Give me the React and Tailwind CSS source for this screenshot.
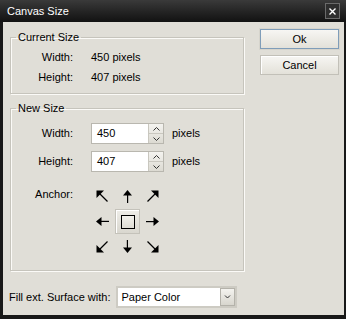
import React from 'react';

const font = "font-['Liberation_Sans',Arial,sans-serif]";

function Arrow({ dir }) {
  const rot = { n: 0, e: 90, s: 180, w: 270 }[dir];
  return (
    <svg width="13" height="13" viewBox="0 0 13 13" style={{ transform: `rotate(${rot}deg)` }}>
      <polygon points="6.5,0 2,5.5 11,5.5" fill="#000" />
      <rect x="6" y="5" width="1.2" height="8" fill="#000" />
    </svg>
  );
}

function Diag({ dir }) {
  const rot = { nw: 0, ne: 90, se: 180, sw: 270 }[dir];
  return (
    <svg width="13" height="13" viewBox="0 0 13 13" style={{ transform: `rotate(${rot}deg)` }}>
      <polygon points="0.5,0.5 8,0.5 0.5,8" fill="#000" />
      <line x1="2" y1="2" x2="11.5" y2="11.5" stroke="#000" strokeWidth="1.2" />
    </svg>
  );
}

function Spin({ value }) {
  return (
    <div className="flex h-[21px] w-[73px] border border-[#b9b7af] bg-white">
      <div className="flex-1 pl-[5px] flex items-center">{value}</div>
      <div className="w-[15px] flex flex-col border-l border-[#c9c7bf] bg-gradient-to-b from-[#f4f3ef] to-[#dcdad2]">
        <div className="flex-1 flex items-center justify-center border-b border-[#c9c7bf]">
          <svg width="7" height="4" viewBox="0 0 7 4"><polyline points="0.5,3.5 3.5,0.5 6.5,3.5" fill="none" stroke="#333" strokeWidth="1" /></svg>
        </div>
        <div className="flex-1 flex items-center justify-center">
          <svg width="7" height="4" viewBox="0 0 7 4"><polyline points="0.5,0.5 3.5,3.5 6.5,0.5" fill="none" stroke="#333" strokeWidth="1" /></svg>
        </div>
      </div>
    </div>
  );
}

function Row({ label, children, className = '' }) {
  return (
    <div className={`flex items-center ${className}`}>
      <div className="w-[62px] text-right">{label}</div>
      <div className="ml-[18px] flex items-center">{children}</div>
    </div>
  );
}

function Group({ title, children, className = '' }) {
  return (
    <fieldset className={`border border-[#c6c4bc] shadow-[inset_1px_1px_0_#fbfaf7,1px_1px_0_#fbfaf7] ${className}`}>
      <legend className="ml-[5px] px-[2px] leading-[13px]">{title}</legend>
      {children}
    </fieldset>
  );
}

export default function App() {
  return (
    <div className={`w-[346px] h-[319px] bg-[#181818] flex flex-col text-[11px] text-black ${font}`}>
      <div className="h-[22px] flex items-center justify-between bg-gradient-to-b from-[#3a3a3a] to-[#121212] pl-[7px] pr-[6px]">
        <span className="text-white text-[11px] pt-[1px]">Canvas Size</span>
        <div className="w-[15px] h-[16px] border border-[#6a6a6a] bg-[#2e2e2e] flex items-center justify-center">
          <svg width="7" height="7" viewBox="0 0 7 7"><path d="M0.5 0.5 L6.5 6.5 M6.5 0.5 L0.5 6.5" stroke="#fff" strokeWidth="1.4" /></svg>
        </div>
      </div>
      <div className="flex-1 ml-[3px] mr-[2px] mb-[4px] bg-[#e0ded7] flex">
        <div className="ml-[7px] w-[234px] flex flex-col">
          <Group title="Current Size" className="mt-[9px] pt-[3px] pb-[6px]">
            <Row label="Width:" className="h-[20px]">450 pixels</Row>
            <Row label="Height:" className="h-[20px]">407 pixels</Row>
          </Group>
          <Group title="New Size" className="mt-[8px] pt-[8px] pb-[11px]">
            <Row label="Width:">
              <Spin value="450" />
              <span className="ml-[8px]">pixels</span>
            </Row>
            <Row label="Height:" className="mt-[7px]">
              <Spin value="407" />
              <span className="ml-[8px]">pixels</span>
            </Row>
            <div className="flex items-start mt-[12px]">
              <div className="w-[62px] text-right mt-[2px]">Anchor:</div>
              <div className="ml-[17px] grid grid-cols-[25px_25px_25px] grid-rows-[25px_25px_25px]">
                <div className="flex items-center justify-center"><Diag dir="nw" /></div>
                <div className="flex items-center justify-center"><Arrow dir="n" /></div>
                <div className="flex items-center justify-center"><Diag dir="ne" /></div>
                <div className="flex items-center justify-center"><Arrow dir="w" /></div>
                <div className="flex items-center justify-center border border-[#c4c2ba] bg-gradient-to-b from-[#eeede8] to-[#d9d7cf] shadow-[inset_1px_1px_0_#ffffff]">
                  <div className="w-[14px] h-[14px] border border-black bg-gradient-to-b from-[#f2f1ec] to-[#dedcd4]" />
                </div>
                <div className="flex items-center justify-center"><Arrow dir="e" /></div>
                <div className="flex items-center justify-center"><Diag dir="sw" /></div>
                <div className="flex items-center justify-center"><Arrow dir="s" /></div>
                <div className="flex items-center justify-center"><Diag dir="se" /></div>
              </div>
            </div>
          </Group>
          <div className="flex items-center mt-[15px] -ml-[1px]">
            <span>Fill ext. Surface with:</span>
            <div className="ml-[6px] w-[121px] h-[22px] flex border-2 border-[#cdcbc3] bg-white">
              <div className="flex-1 flex items-center pl-[3px]">Paper Color</div>
              <div className="w-[15px] flex items-center justify-center border border-[#b4b2aa] bg-gradient-to-b from-[#f4f3ef] to-[#d8d6ce]">
                <svg width="7" height="4" viewBox="0 0 7 4"><polyline points="1,0.5 3.5,3 6,0.5" fill="none" stroke="#333" strokeWidth="1" /></svg>
              </div>
            </div>
          </div>
        </div>
        <div className="ml-[16px] mt-[7px] w-[79px] flex flex-col gap-[6px]">
          <div className="h-[20px] border border-[#7f9db9] shadow-[0_0_0_1px_#d6d4cc] bg-gradient-to-b from-[#f7f6f3] to-[#e3e1d9] flex items-center justify-center">Ok</div>
          <div className="h-[20px] border border-[#c2c0b8] shadow-[inset_1px_1px_0_#ffffff] bg-gradient-to-b from-[#f7f6f3] to-[#e3e1d9] flex items-center justify-center">Cancel</div>
        </div>
      </div>
    </div>
  );
}
